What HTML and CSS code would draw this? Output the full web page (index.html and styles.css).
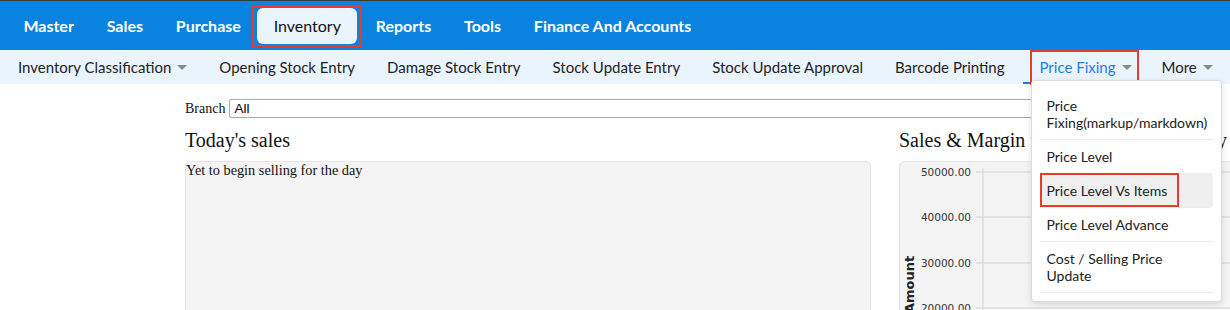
FILE: index.html
```html
<!DOCTYPE html>
<html lang="en">
<head>
    <meta charset="UTF-8">
    <meta name="viewport" content="width=device-width, initial-scale=1.0">
    <title>Inventory - Dashboard</title>
    <link rel="stylesheet" href="styles.css">
</head>
<body>
    <nav class="topbar">
        <a class="top-item">Master</a>
        <a class="top-item">Sales</a>
        <a class="top-item">Purchase</a>
        <span class="mark-box"><a class="top-item active">Inventory</a></span>
        <a class="top-item">Reports</a>
        <a class="top-item">Tools</a>
        <a class="top-item">Finance And Accounts</a>
    </nav>

    <nav class="subbar">
        <a class="sub-item">Inventory Classification <span class="caret"></span></a>
        <a class="sub-item">Opening Stock Entry</a>
        <a class="sub-item">Damage Stock Entry</a>
        <a class="sub-item">Stock Update Entry</a>
        <a class="sub-item">Stock Update Approval</a>
        <a class="sub-item">Barcode Printing</a>
        <div class="sub-item open">
            Price Fixing <span class="caret"></span>
            <span class="mark-overlay"></span>
            <ul class="dropdown">
                <li>Price Fixing(markup/markdown)</li>
                <li>Price Level</li>
                <li class="hover">Price Level Vs Items<span class="mark-overlay"></span></li>
                <li>Price Level Advance</li>
                <li>Cost / Selling Price Update</li>
            </ul>
        </div>
        <a class="sub-item">More <span class="caret"></span></a>
    </nav>

    <main class="content">
        <div class="branch-row">
            <label for="branch">Branch</label>
            <select id="branch" class="branch-select">
                <option>All</option>
            </select>
        </div>

        <div class="dash">
            <section>
                <h2>Today's sales</h2>
                <div class="panel">Yet to begin selling for the day</div>
            </section>
            <section>
                <h2>Sales &amp; Margin for this month and today</h2>
                <div class="panel chart">
                    <svg width="340" height="160" viewBox="0 0 340 160">
                        <g class="grid">
                            <line x1="76" y1="10" x2="340" y2="10"/>
                            <line x1="76" y1="55" x2="340" y2="55"/>
                            <line x1="76" y1="101" x2="340" y2="101"/>
                            <line x1="76" y1="146" x2="340" y2="146"/>
                            <line x1="83" y1="6" x2="83" y2="160"/>
                        </g>
                        <g class="ticks">
                            <text x="71" y="14">50000.00</text>
                            <text x="71" y="59">40000.00</text>
                            <text x="71" y="105">30000.00</text>
                            <text x="71" y="150">20000.00</text>
                        </g>
                        <text class="axis-title" transform="translate(14,151) rotate(-90)">Amount</text>
                    </svg>
                </div>
            </section>
        </div>
    </main>
</body>
</html>
```

FILE: styles.css
```css
body {
    margin: 0;
    font-family: "Liberation Serif", "Times New Roman", serif;
    color: #111;
    background: #fff;
    overflow: hidden;
}

a {
    text-decoration: none;
    cursor: pointer;
}

/* main menu */
.topbar {
    display: flex;
    align-items: center;
    height: 49px;
    padding-left: 7px;
    background-color: #0a83e0;
    border-top: 1px solid #3a3a3a;
    font-family: Lato, "Liberation Sans", sans-serif;
}

.top-item {
    display: block;
    padding: 0 16.4px;
    height: 36px;
    line-height: 36px;
    font-size: 16px;
    font-weight: 700;
    color: #fff;
}

.top-item.active {
    background-color: #eaf4fd;
    color: #111;
    font-weight: 400;
    border-radius: 6px;
}

.mark-box {
    display: block;
    margin: 0 -3px 0 -5px;
    padding: 1px 3px;
    border: 2px solid #ea3a2c;
}

/* sub menu */
.subbar {
    display: flex;
    align-items: center;
    height: 34px;
    padding-left: 2px;
    background-color: #eaf4fd;
    font-family: Lato, "Liberation Sans", sans-serif;
    font-size: 15px;
}

.sub-item {
    position: relative;
    display: flex;
    align-items: center;
    gap: 6px;
    height: 34px;
    padding: 0 16px;
    color: #222;
    white-space: nowrap;
}

.sub-item.open {
    margin-left: 3px;
    margin-right: -2px;
    color: #1f7fe0;
    box-sizing: border-box;
    border-bottom: 2px solid #1f7fe0;
    padding-top: 2px;
}

.caret {
    width: 0;
    height: 0;
    border-left: 5px solid transparent;
    border-right: 5px solid transparent;
    border-top: 5px solid #8a8a8a;
}

.mark-overlay {
    position: absolute;
    left: 7px;
    right: 9px;
    top: 0;
    bottom: -3px;
    border: 2px solid #ea3a2c;
    pointer-events: none;
}

.dropdown {
    position: absolute;
    top: 30px;
    left: 8px;
    z-index: 5;
    width: 173px;
    margin: 0;
    padding: 8px;
    list-style: none;
    background: #fff;
    border: 1px solid #dcdcdc;
    border-radius: 4px;
    box-shadow: 0 2px 6px rgba(0, 0, 0, 0.12);
    font-size: 14px;
    line-height: 17px;
    white-space: normal;
}

.dropdown li {
    position: relative;
    padding: 8px 6px;
    color: #222;
    border-bottom: 1px solid #ececec;
}

.dropdown li.hover {
    background-color: #efefef;
    border-radius: 4px;
}

.dropdown li .mark-overlay {
    left: 0;
    right: auto;
    width: 135px;
    top: -1px;
    bottom: 0;
}

/* page content */
.content {
    padding: 15px 0 0 185px;
}

.branch-row {
    display: flex;
    align-items: center;
    gap: 4px;
    font-size: 14px;
}

.branch-select {
    appearance: none;
    width: 985px;
    height: 19px;
    padding: 0 4px;
    border: 1px solid #a9a9a9;
    border-radius: 2px;
    background: #fff;
    font-family: "Liberation Sans", Arial, sans-serif;
    font-size: 13.5px;
    color: #000;
}

.dash {
    display: grid;
    grid-template-columns: 686px 360px;
    gap: 28px;
}

.dash h2 {
    margin: 11px 0 9px;
    font-size: 20px;
    font-weight: 400;
    line-height: 23px;
    white-space: nowrap;
}

.panel {
    height: 200px;
    background-color: #f4f4f4;
    border: 1px solid #e6e6e6;
    border-radius: 5px;
    font-size: 14.3px;
    line-height: 16px;
}

.chart {
    overflow: hidden;
}

.chart svg {
    display: block;
}

.grid line {
    stroke: #dedede;
    stroke-width: 1.5;
}

.ticks text {
    font-family: "DejaVu Sans", sans-serif;
    font-size: 10.5px;
    fill: #333;
    text-anchor: end;
}

.axis-title {
    font-family: "DejaVu Sans", sans-serif;
    font-size: 13px;
    font-weight: 700;
    fill: #222;
}
```
